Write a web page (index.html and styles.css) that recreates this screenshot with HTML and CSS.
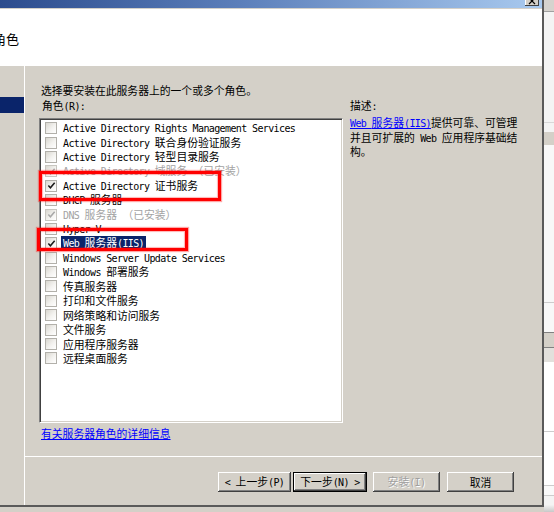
FILE: index.html
```html
<!DOCTYPE html>
<html lang="zh-CN">
<head>
<meta charset="utf-8">
<title>添加角色向导</title>
<link rel="stylesheet" href="styles.css">
</head>
<body>
<div class="screen">
  <div class="window">
    <div class="titlebar">
      <span class="close"><svg width="14" height="6" viewBox="0 0 14 6"><path d="M4 -2 L10 4 M10 -2 L4 4" stroke="#000" stroke-width="1.2" fill="none"/></svg></span>
    </div>
    <div class="header"><h1 class="title">选择服务器角色</h1></div>
    <div class="main">
      <nav class="nav"><div class="nav-sel"></div></nav>
      <div class="content">
        <div class="body">
          <p class="intro">选择要安装在此服务器上的一个或多个角色。</p>
          <div class="cols">
            <div class="label">角色<span class="en">(R):</span></div>
            <div class="label label-desc">描述<span class="en">:</span></div>
            <div class="listbox">
              <ul class="roles">
                <li class="role"><span class="cb"></span><span class="name"><span class="en">Active Directory Rights Management Services</span></span></li>
                <li class="role"><span class="cb"></span><span class="name"><span class="en">Active Directory </span>联合身份验证服务</span></li>
                <li class="role"><span class="cb"></span><span class="name"><span class="en">Active Directory </span>轻型目录服务</span></li>
                <li class="role off"><span class="cb"><svg class="tick" viewBox="0 0 10 10"><path d="M1.5 5 L3.8 7.5 L8.5 2"/></svg></span><span class="name"><span class="en">Active Directory </span>域服务<span class="en"> </span>（已安装）</span></li>
                <li class="role"><span class="cb"><svg class="tick" viewBox="0 0 10 10"><path d="M1.5 5 L3.8 7.5 L8.5 2"/></svg></span><span class="name"><span class="en">Active Directory </span>证书服务</span></li>
                <li class="role"><span class="cb"></span><span class="name"><span class="en">DHCP </span>服务器</span></li>
                <li class="role off"><span class="cb"><svg class="tick" viewBox="0 0 10 10"><path d="M1.5 5 L3.8 7.5 L8.5 2"/></svg></span><span class="name"><span class="en">DNS </span>服务器<span class="en"> </span>（已安装）</span></li>
                <li class="role"><span class="cb"></span><span class="name"><span class="en">Hyper-V</span></span></li>
                <li class="role sel"><span class="cb"><svg class="tick" viewBox="0 0 10 10"><path d="M1.5 5 L3.8 7.5 L8.5 2"/></svg></span><span class="name"><span class="en">Web </span>服务器<span class="en">(IIS)</span></span></li>
                <li class="role"><span class="cb"></span><span class="name"><span class="en">Windows Server Update Services</span></span></li>
                <li class="role"><span class="cb"></span><span class="name"><span class="en">Windows </span>部署服务</span></li>
                <li class="role"><span class="cb"></span><span class="name">传真服务器</span></li>
                <li class="role"><span class="cb"></span><span class="name">打印和文件服务</span></li>
                <li class="role"><span class="cb"></span><span class="name">网络策略和访问服务</span></li>
                <li class="role"><span class="cb"></span><span class="name">文件服务</span></li>
                <li class="role"><span class="cb"></span><span class="name">应用程序服务器</span></li>
                <li class="role"><span class="cb"></span><span class="name">远程桌面服务</span></li>
              </ul>
              <div class="mark mark-cert"></div>
              <div class="mark mark-web"></div>
            </div>
            <p class="desc"><a class="link" href="#"><span class="en">Web </span>服务器<span class="en">(IIS)</span></a>提供可靠、可管理并且可扩展的<span class="en"> Web </span>应用程序基础结构。</p>
          </div>
          <a class="link more" href="#">有关服务器角色的详细信息</a>
        </div>
        <div class="footer">
          <div class="pair">
            <button class="btn btn-back"><span class="en">&lt; </span>上一步<span class="en">(P)</span></button>
            <button class="btn btn-next">下一步<span class="en">(N) &gt;</span></button>
          </div>
          <button class="btn btn-install" disabled>安装<span class="en">(I)</span></button>
          <button class="btn btn-cancel">取消</button>
        </div>
      </div>
    </div>
  </div>
  <div class="backdrop">
    <div class="bd bd-top"></div>
    <div class="bd bd-pane1"></div>
    <div class="bd bd-gap"></div>
    <div class="bd bd-band"></div>
    <div class="bd bd-pane2"></div>
    <div class="bd bd-pane3"></div>
    <div class="bd bd-tab"></div>
    <div class="bd bd-tab2"></div>
    <div class="bd bd-row1"></div>
    <div class="bd bd-row2"></div>
    <div class="bd bd-row3"></div>
    <div class="bd bd-foot"></div>
  </div>
</div>
</body>
</html>
```

FILE: styles.css
```css
html, body {
  margin: 0;
  padding: 0;
}

body {
  background: #d4d0c8;
  font-family: "Noto Sans CJK SC", "Noto Sans CJK JP", sans-serif;
  font-size: 10.8px;
  color: #000;
}

.en {
  font-family: "DejaVu Sans Mono", "Liberation Mono", monospace;
  font-size: 10px;
  letter-spacing: -0.62px;
}

.screen {
  display: flex;
  width: 554px;
  height: 512px;
  overflow: hidden;
}

/* ---------- window ---------- */
.window {
  flex: none;
  width: 544px;
  height: 507px;
  box-sizing: border-box;
  border-right: 2px solid #5a5a5a;
  border-bottom: 2px solid #5a5a5a;
  display: flex;
  flex-direction: column;
  background: #d4d0c8;
}

.titlebar {
  flex: none;
  height: 8px;
  border-bottom: 1px solid #d4d0c8;
  background: linear-gradient(90deg, #2c4c8d 0%, #5d80bb 45%, #a9caef 100%);
  display: flex;
  justify-content: flex-end;
  align-items: flex-start;
}

.close {
  width: 14px;
  height: 6px;
  margin-right: 3px;
  background: #d4d0c8;
  box-shadow: inset -1px -1px #404040, inset 1px 0 #fff;
  display: block;
}

.close svg {
  display: block;
}

.header {
  flex: none;
  height: 57px;
  background: #fff;
  overflow: hidden;
}

.title {
  margin: 0 0 0 -72px;
  padding-top: 22px;
  font-size: 13px;
  line-height: 16px;
  font-weight: normal;
  white-space: nowrap;
}

.main {
  flex: 1;
  display: flex;
  min-height: 0;
}

.nav {
  flex: none;
  width: 24px;
  border-right: 1px solid #fff;
  padding-top: 31px;
}

.nav-sel {
  height: 16px;
  background: #0a246a;
}

.content {
  flex: 1;
  display: flex;
  flex-direction: column;
}

.body {
  flex: 1;
  padding: 17px 0 0 14px;
}

.intro {
  margin: 0 0 1px;
  padding-left: 2px;
  line-height: 14px;
}

.cols {
  display: grid;
  grid-template-columns: 304px 1fr;
  grid-template-rows: 14px 305px;
  column-gap: 7px;
  row-gap: 6px;
}

.label {
  line-height: 14px;
  padding-left: 3px;
}

.label-desc {
  padding-left: 0;
}

/* ---------- list box ---------- */
.listbox {
  position: relative;
  box-sizing: border-box;
  background: #fff;
  border-top: 1px solid #808080;
  border-left: 1px solid #808080;
  border-right: 1px solid #fff;
  border-bottom: 1px solid #fff;
  box-shadow: inset 1px 1px #404040, inset -1px -1px #d4d0c8;
  padding: 2px 0 0 5px;
}

.roles {
  margin: 0;
  padding: 0;
  list-style: none;
}

.role {
  display: flex;
  align-items: center;
  gap: 4px;
  height: 14.4px;
  white-space: nowrap;
}

.cb {
  flex: none;
  width: 12px;
  height: 12px;
  box-sizing: border-box;
  border: 1px solid #b2b0aa;
  background: linear-gradient(135deg, #d9d7d0 0%, #f3f2ef 55%, #fff 100%);
  display: flex;
  align-items: center;
  justify-content: center;
}

.tick {
  width: 9px;
  height: 9px;
  fill: none;
  stroke: #1a1a1a;
  stroke-width: 1.7;
}

.name {
  padding: 0 2px;
  line-height: 13px;
}

.role.off {
  color: #a3a3a3;
}

.role.off .tick {
  stroke: #a8a8a8;
}

.role.off .cb {
  border-color: #c8c6c0;
}

.role.sel .name {
  background: #0a246a;
  color: #fff;
}

.mark {
  position: absolute;
  box-sizing: border-box;
  border: 3px solid #ff0000;
  box-shadow: 0 0 1px 1px rgba(255, 0, 0, 0.35), inset 0 0 1px 1px rgba(255, 0, 0, 0.3);
  pointer-events: none;
}

.mark-cert {
  left: -1px;
  top: 52px;
  width: 182px;
  height: 30px;
}

.mark-web {
  left: -3px;
  top: 109px;
  width: 151px;
  height: 23px;
}

/* ---------- description ---------- */
.desc {
  margin: -2px 0 0;
  width: 172px;
  line-height: 12.5px;
}

.link {
  color: #0000ff;
  text-decoration: underline;
}

.more {
  display: inline-block;
  margin: 3px 0 0 2px;
  line-height: 14px;
}

/* ---------- footer ---------- */
.footer {
  flex: none;
  height: 49px;
  box-sizing: border-box;
  border-top: 1px solid #fff;
  padding: 15px 28px 0 0;
  display: flex;
  justify-content: flex-end;
  align-items: flex-start;
  gap: 6px;
}

.pair {
  display: flex;
  gap: 2px;
}

.btn {
  height: 20px;
  padding: 0;
  border: none;
  background: #d4d0c8;
  font-family: inherit;
  font-size: 10.8px;
  line-height: 14px;
  color: #000;
  box-shadow: inset -1px -1px #404040, inset 1px 1px #fff, inset -2px -2px #808080;
  white-space: nowrap;
}

.btn-back {
  width: 73px;
}

.btn-next {
  width: 74px;
  box-shadow: inset 0 0 0 1px #000, inset -2px -2px #404040, inset 2px 2px #fff, inset -3px -3px #808080;
}

.btn-install {
  width: 67px;
  color: #a0a0a0;
  text-shadow: 1px 1px #fff;
}

.btn-cancel {
  width: 67px;
  margin-left: 1px;
}

/* ---------- window behind ---------- */
.backdrop {
  flex: 1;
  display: flex;
  flex-direction: column;
  background: #f6f6f6;
}

.bd {
  flex: none;
  box-sizing: border-box;
}

.bd-top {
  height: 12px;
  background: #d6d3ce;
  border-bottom: 1px solid #a0a0a0;
}

.bd-pane1 {
  height: 111px;
  background: #f4f4f4;
  border-bottom: 1px solid #d8d8d8;
}

.bd-gap {
  height: 9px;
  background: #f4f4f4;
}

.bd-band {
  height: 13px;
  background: #d4d0c8;
}

.bd-pane2 {
  height: 158px;
  background: #f8f8f8;
  border-bottom: 1px solid #cccccc;
}

.bd-pane3 {
  height: 30px;
  background: #f8f8f8;
  border-bottom: 1px solid #808080;
}

.bd-tab {
  height: 15px;
  background: #d4d0c8;
  border-bottom: 1px solid #808080;
}

.bd-tab2 {
  height: 14px;
  background: #e2e0dc;
}

.bd-row1 {
  height: 70px;
  background: #fff;
  border-bottom: 1px solid #cccccc;
}

.bd-row2 {
  height: 54px;
  background: #fff;
  border-bottom: 1px solid #cccccc;
}

.bd-row3 {
  height: 10px;
  background: #fafafa;
  border-bottom: 1px solid #cccccc;
}

.bd-foot {
  flex: 1;
  background: linear-gradient(#f4f4f4 0%, #f4f4f4 55%, #c8c8c8 100%);
}
```
